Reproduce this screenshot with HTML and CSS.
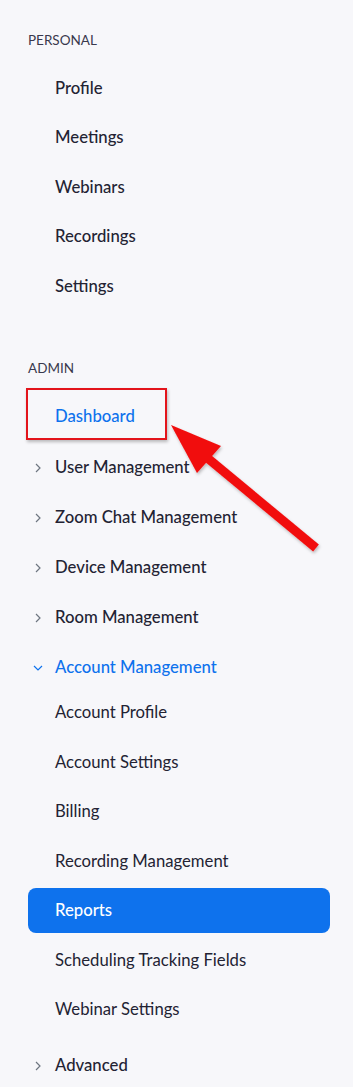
FILE: index.html
```html
<!DOCTYPE html>
<html lang="en">
<head>
    <meta charset="UTF-8">
    <meta name="viewport" content="width=device-width, initial-scale=1.0">
    <title>Zoom - Admin Menu</title>
    <link rel="stylesheet" href="styles.css">
</head>
<body>
    <nav class="side-nav">
        <div class="nav-section">
            <div class="nav-heading">Personal</div>
            <ul class="nav-list">
                <li class="nav-item">Profile</li>
                <li class="nav-item">Meetings</li>
                <li class="nav-item">Webinars</li>
                <li class="nav-item">Recordings</li>
                <li class="nav-item">Settings</li>
            </ul>
        </div>

        <div class="nav-section">
            <div class="nav-heading admin">Admin</div>
            <ul class="nav-list top-level">
                <li class="nav-item active-link">
                    Dashboard
                    <span class="callout-box"></span>
                </li>
                <li class="nav-item has-children">
                    <svg class="chevron" viewBox="0 0 6 10"><path d="M1 1l4 4-4 4"/></svg>
                    User Management
                </li>
                <li class="nav-item has-children">
                    <svg class="chevron" viewBox="0 0 6 10"><path d="M1 1l4 4-4 4"/></svg>
                    Zoom Chat Management
                </li>
                <li class="nav-item has-children">
                    <svg class="chevron" viewBox="0 0 6 10"><path d="M1 1l4 4-4 4"/></svg>
                    Device Management
                </li>
                <li class="nav-item has-children">
                    <svg class="chevron" viewBox="0 0 6 10"><path d="M1 1l4 4-4 4"/></svg>
                    Room Management
                </li>
                <li class="nav-item has-children open">
                    <svg class="chevron down" viewBox="0 0 10 6"><path d="M1 1l4 4 4-4"/></svg>
                    Account Management
                </li>
            </ul>
            <ul class="nav-list sub-list">
                <li class="nav-item sub">Account Profile</li>
                <li class="nav-item sub">Account Settings</li>
                <li class="nav-item sub">Billing</li>
                <li class="nav-item sub">Recording Management</li>
                <li class="nav-item sub selected">Reports</li>
                <li class="nav-item sub">Scheduling Tracking Fields</li>
                <li class="nav-item sub">Webinar Settings</li>
            </ul>
            <ul class="nav-list top-level">
                <li class="nav-item has-children">
                    <svg class="chevron" viewBox="0 0 6 10"><path d="M1 1l4 4-4 4"/></svg>
                    Advanced
                </li>
            </ul>
        </div>

        <!-- annotation arrow pointing at Dashboard -->
        <svg class="callout-arrow" width="353" height="1087" viewBox="0 0 353 1087">
            <g filter="url(#arrowShadow)">
                <line x1="316" y1="548" x2="205" y2="456" stroke="#f10d0d" stroke-width="9" stroke-linecap="butt"/>
                <polygon points="171,425 221,446 197,473" fill="#f10d0d"/>
            </g>
            <defs>
                <filter id="arrowShadow" x="-20%" y="-20%" width="140%" height="140%">
                    <feDropShadow dx="1" dy="2" stdDeviation="1.5" flood-color="#000" flood-opacity="0.25"/>
                </filter>
            </defs>
        </svg>
    </nav>
</body>
</html>
```

FILE: styles.css
```css
body {
    margin: 0;
    background-color: #f7f7fa;
    font-family: Lato, 'Open Sans', sans-serif;
    color: #232333;
}
.side-nav {
    position: relative;
    padding: 30px 23px 0 28px;
    height: 1057px;
    overflow: hidden;
}
.nav-section {
    padding-bottom: 45px;
}
.nav-heading {
    height: 20px;
    line-height: 20px;
    font-size: 13.5px;
    text-transform: uppercase;
    color: #39394d;
    margin-bottom: 15px;
}
.nav-heading.admin {
    margin-bottom: 16px;
}
.nav-list {
    list-style: none;
    margin: 0;
    padding: 0;
}
.nav-item {
    position: relative;
    display: flex;
    align-items: center;
    height: 45px;
    padding-left: 27px;
    margin-bottom: 4.5px;
    font-size: 16.7px;
    font-weight: 500;
    border-radius: 8px;
}
.top-level .nav-item {
    margin-bottom: 5px;
}
.top-level .nav-item.active-link {
    margin-bottom: 6px;
}
.top-level .nav-item.open {
    margin-bottom: 0;
}
.nav-item.sub {
    font-weight: 400;
}
.nav-list.sub-list {
    padding-bottom: 6.5px;
}
.active-link,
.open {
    color: #0e72ed;
}
.selected {
    background-color: #0e72ed;
    color: #fff;
    font-weight: 500 !important;
}
.chevron {
    position: absolute;
    left: 7px;
    top: 18px;
    width: 6px;
    height: 10px;
    fill: none;
    stroke: #6e7680;
    stroke-width: 1.2;
}
.chevron.down {
    left: 5px;
    top: 20px;
    width: 10px;
    height: 6px;
    stroke: #0e72ed;
}
.callout-box {
    position: absolute;
    left: -2px;
    top: -5.5px;
    width: 141px;
    height: 52px;
    box-sizing: border-box;
    border: 2px solid #e3141b;
    box-shadow: 1px 2px 3px rgba(0, 0, 0, 0.25);
}
.callout-arrow {
    position: absolute;
    left: 0;
    top: 0;
    pointer-events: none;
}
```
